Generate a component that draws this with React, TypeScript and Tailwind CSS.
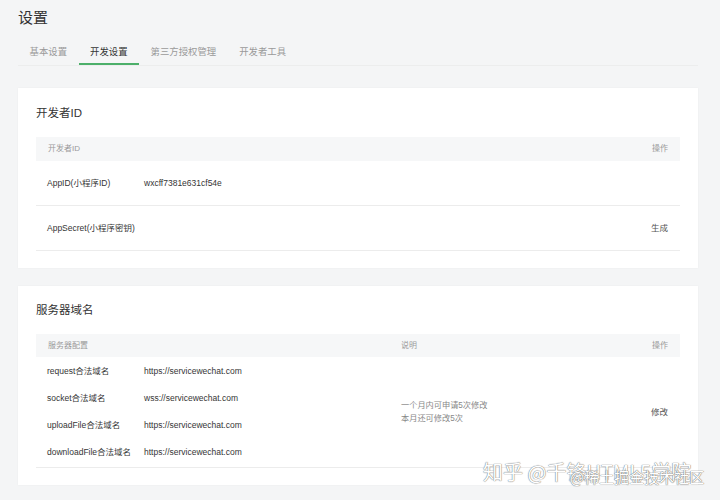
import React from "react";

const font = { fontFamily: '"Liberation Sans", "Noto Sans CJK SC", sans-serif' };

export default function App() {
  const servers = [
    ["request合法域名", "https://servicewechat.com"],
    ["socket合法域名", "wss://servicewechat.com"],
    ["uploadFile合法域名", "https://servicewechat.com"],
    ["downloadFile合法域名", "https://servicewechat.com"],
  ];
  return (
    <div className="relative w-[720px] h-[500px] overflow-hidden bg-[#f4f5f6] text-[#353535]" style={font}>
      <div className="pl-[18px] pr-[22px]">
        <div className="h-[36px] flex items-center text-[15px] text-[#333]">设置</div>
        <div className="flex h-[30px] items-stretch border-b border-[#eceded] text-[9.4px]">
          {["基本设置", "开发设置", "第三方授权管理", "开发者工具"].map((t, i) => (
            <div
              key={t}
              className={
                "flex items-center px-[11.5px] pt-[6px] border-b-2 " +
                (i === 1 ? "border-[#4caf6a] text-[#353535]" : "border-transparent text-[#9a9a9a]")
              }
            >
              {t}
            </div>
          ))}
        </div>

        <div className="mt-[22px] bg-white px-[18px] pb-[17px] shadow-[0_0_2px_rgba(0,0,0,0.04)]">
          <div className="h-[49px] flex items-center pt-[2px] text-[11.5px] text-[#333]">开发者ID</div>
          <div className="h-[24px] bg-[#f6f7f8] flex items-center justify-between px-[12px] text-[8px] text-[#9a9a9a]">
            <span>开发者ID</span>
            <span>操作</span>
          </div>
          <div className="h-[45px] flex items-center border-b border-[#ececec] pl-[11px] pr-[12px] text-[8.5px]">
            <span className="w-[97px]">AppID(小程序ID)</span>
            <span>wxcff7381e631cf54e</span>
          </div>
          <div className="h-[45px] flex items-center justify-between border-b border-[#ececec] pl-[11px] pr-[12px] text-[8.5px]">
            <span>AppSecret(小程序密钥)</span>
            <span className="text-[#555]">生成</span>
          </div>
        </div>

        <div className="mt-[18px] bg-white px-[18px] pb-[17px] shadow-[0_0_2px_rgba(0,0,0,0.04)]">
          <div className="h-[48px] flex items-center pt-[2px] text-[11.5px] text-[#333]">服务器域名</div>
          <div className="h-[23px] bg-[#f6f7f8] flex items-center px-[12px] text-[8px] text-[#9a9a9a]">
            <span className="w-[353px]">服务器配置</span>
            <span className="flex-1">说明</span>
            <span>操作</span>
          </div>
          <div className="flex items-center border-b border-[#ececec] pl-[11px] pr-[12px] pt-[1px] pb-[1px]">
            <div className="w-[354px] flex flex-col">
              {servers.map(([k, v]) => (
                <div key={k} className="h-[27px] flex items-center text-[8.5px]">
                  <span className="w-[97px]">{k}</span>
                  <span>{v}</span>
                </div>
              ))}
            </div>
            <div className="flex-1 text-[8.2px] leading-[13px] text-[#888] pb-[1px]">
              <div>一个月内可申请5次修改</div>
              <div>本月还可修改5次</div>
            </div>
            <span className="text-[8.5px] text-[#555]">修改</span>
          </div>
        </div>
      </div>

      <div
        className="absolute left-[483px] top-[457px] text-[20px] text-white whitespace-nowrap [text-shadow:0_0_1px_#777,0_0_1px_#777]"
        style={{ fontFamily: '"Noto Sans CJK SC", sans-serif' }}
      >
        知乎 @千锋HTML5学院
      </div>
      <div
        className="absolute left-[570px] top-[466px] text-[15px] text-white whitespace-nowrap [text-shadow:0_0_1px_#666,0_0_1px_#666]"
        style={{ fontFamily: '"Noto Sans CJK SC", sans-serif' }}
      >
        @稀土掘金技术社区
      </div>
    </div>
  );
}
